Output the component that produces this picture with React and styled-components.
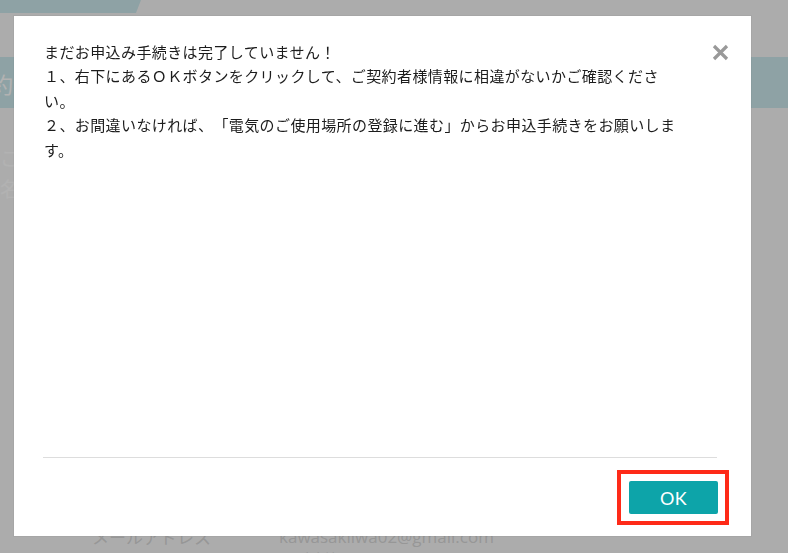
import React from 'react';
import styled, { createGlobalStyle } from 'styled-components';

const GlobalStyle = createGlobalStyle`
  html, body {
    margin: 0;
    padding: 0;
    background: #f7f7f7;
    overflow: hidden;
  }
  body {
    font-family: "Noto Sans CJK JP", "Noto Sans", sans-serif;
  }
`;

// page behind the dialog
const Page = styled.div`
  width: 788px;
  height: 553px;
  overflow: hidden;
`;

const Header = styled.div`
  height: 13px;
  display: flex;
`;

const HeaderTab = styled.div`
  width: 141px;
  background: #cce9ed;
  clip-path: polygon(0 0, 141px 0, 136px 100%, 0 100%);
`;

const Band = styled.div`
  margin-top: 44px;
  height: 51px;
  background: #cce9ed;
  display: flex;
  align-items: center;
  overflow: hidden;
`;

const BandTitle = styled.h2`
  margin: 0 0 0 -53px;
  font-size: 22px;
  font-weight: 400;
  color: #ffffff;
  white-space: nowrap;
`;

const Intro = styled.div`
  margin-top: 34px;
  font-size: 20px;
  line-height: 31px;
  color: #ffffff;
`;

const Form = styled.div`
  margin-top: 33px;
  display: grid;
  grid-template-columns: 187px 1fr;
  grid-auto-rows: minmax(40px, auto);
  padding-left: 92px;
`;

const Label = styled.div`
  padding-top: 8px;
  font-size: 17px;
  line-height: 24px;
  color: #d8d8d8;
`;

const Value = styled.div`
  padding-top: 8px;
  font-family: "Open Sans", "Noto Sans CJK JP", sans-serif;
  font-size: 17px;
  line-height: 24px;
  color: #d8d8d8;
`;

const Note = styled.div`
  font-size: 15px;
  line-height: 20px;
`;

// dialog layer
const Overlay = styled.div`
  position: fixed;
  inset: 0;
  background: rgba(0, 0, 0, 0.3);
  padding: 16px 0 0 14px;
`;

const Dialog = styled.div`
  width: 737px;
  height: 520px;
  background: #ffffff;
  box-shadow: 0 0 0 1px rgba(0, 0, 0, 0.04);
  display: flex;
  flex-direction: column;
`;

const Body = styled.div`
  position: relative;
  flex: 1;
  padding: 24px 30px 0 30px;
`;

const Message = styled.div`
  width: 638px;
  font-size: 15px;
  line-height: 24.4px;
  letter-spacing: 0.4px;
  color: #1c1c1c;
  text-spacing-trim: space-all;

  p {
    margin: 0;
  }
`;

const Close = styled.button`
  position: absolute;
  top: 28px;
  right: 22px;
  width: 17px;
  height: 17px;
  padding: 0;
  border: none;
  background: transparent;
  cursor: pointer;
  display: flex;
  align-items: center;
  justify-content: center;
`;

const Footer = styled.div`
  margin: 0 34px 0 29px;
  border-top: 1px solid #dddddd;
  padding: 12px 0 11px;
  display: flex;
  justify-content: flex-end;
`;

const Highlight = styled.div`
  border: 4px solid #fe2a18;
  padding: 7px 7px 7px 8px;
  margin-right: -12px;
  display: flex;
`;

const OkButton = styled.button`
  width: 89px;
  height: 33px;
  border: none;
  border-radius: 2px;
  background: #0da4a9;
  color: #ffffff;
  font-family: Lato, "Open Sans", sans-serif;
  font-size: 18px;
  letter-spacing: 0.3px;
  cursor: pointer;
  padding: 0;
`;

const rows = [
  ['氏名', '川崎 岩男'],
  ['フリガナ', 'カワサキ イワオ'],
  ['生年月日', '1980年1月1日'],
  ['郵便番号', '210-0001'],
  ['住所', '神奈川県川崎市'],
  ['建物名', ''],
  ['電話番号', '090-0000-0000'],
];

const CloseIcon = () => (
  <svg width="17" height="17" viewBox="0 0 17 17">
    <path d="M2 2 L15 15 M15 2 L2 15" stroke="#999999" strokeWidth="3.2" strokeLinecap="butt" />
  </svg>
);

export default function App() {
  return (
    <>
      <GlobalStyle />
      <Page>
        <Header>
          <HeaderTab />
        </Header>
        <Band>
          <BandTitle>ご契約者情報の確認</BandTitle>
        </Band>
        <Intro>
          <div>ご登録内容をご確認ください</div>
          <div>名前</div>
        </Intro>
        <Form>
          {rows.map(([l, v]) => (
            <React.Fragment key={l}>
              <Label>{l}</Label>
              <Value>{v}</Value>
            </React.Fragment>
          ))}
          <Label>メールアドレス</Label>
          <Value>
            kawasakiiwa02@gmail.com
            <Note>※ご連絡用のメールアドレスです</Note>
          </Value>
        </Form>
      </Page>

      <Overlay>
        <Dialog role="dialog">
          <Body>
            <Message>
              <p>まだお申込み手続きは完了していません！</p>
              <p>１、右下にあるＯＫボタンをクリックして、ご契約者様情報に相違がないかご確認ください。</p>
              <p>２、お間違いなければ、「電気のご使用場所の登録に進む」からお申込手続きをお願いします。</p>
            </Message>
            <Close aria-label="閉じる">
              <CloseIcon />
            </Close>
          </Body>
          <Footer>
            <Highlight>
              <OkButton>OK</OkButton>
            </Highlight>
          </Footer>
        </Dialog>
      </Overlay>
    </>
  );
}
